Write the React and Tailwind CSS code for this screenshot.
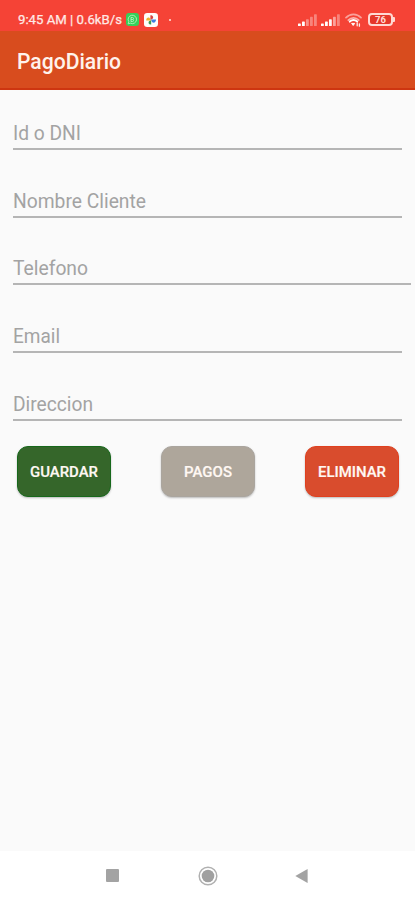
import React from "react";

const fields = [
  { label: "Id o DNI", size: "h-[60px] w-[389px]", length: 68 },
  { label: "Nombre Cliente", size: "h-[68px] w-[389px]", length: 133 },
  { label: "Telefono", size: "h-[67px] w-[398px]", length: 75 },
  { label: "Email", size: "h-[68px] w-[389px]", length: 47 },
  { label: "Direccion", size: "h-[68px] w-[389px]", length: 80 },
];

const buttons = [
  { label: "GUARDAR", color: "bg-[#35662a] border-[#17681b]", length: 68 },
  { label: "PAGOS", color: "bg-[#aea69b] border-[#aaa59e]", length: 48 },
  { label: "ELIMINAR", color: "bg-[#d94c2d] border-[#e0401f]", length: 68 },
];

// One line of text fitted to a fixed advance width.
function Label({ children, length, className, height = 24, baseline = 18 }) {
  return (
    <svg width={length} height={height} className={"block overflow-visible " + className}>
      <text x="0" y={baseline} fill="currentColor" textLength={length} lengthAdjust="spacingAndGlyphs">
        {children}
      </text>
    </svg>
  );
}

function Signal({ strong }) {
  return (
    <svg width="19" height="12" viewBox="0 0 19 12" fill="#fff" className="block">
      <rect x="0" y="9.4" width="2.8" height="2.6" rx=".6" />
      <rect x="4" y="7.6" width="2.8" height="4.4" rx=".6" />
      <rect x="8" y="5.3" width="2.8" height="6.7" rx=".6" opacity={strong ? 0.95 : 0.4} />
      <rect x="12" y="2.8" width="2.8" height="9.2" rx=".6" opacity={strong ? 0.5 : 0.35} />
      <rect x="16" y="0.2" width="2.8" height="11.8" rx=".6" opacity=".35" />
    </svg>
  );
}

function Wifi() {
  return (
    <svg width="17" height="14" viewBox="0 0 17 14" fill="none" stroke="#fff" strokeLinecap="round" className="block">
      <path d="M1 4.7C5.2.3 11.8.3 16 4.7" strokeWidth="1.7" opacity=".5" />
      <path d="M3.3 7.2C6.3 4.2 10.7 4.2 13.7 7.2" strokeWidth="1.7" opacity=".6" />
      <path d="M4.8 8.6C7 6.7 10 6.7 12.2 8.6" strokeWidth="2" />
      <path d="M7 10.4h2.6l-1.2 1.8z" fill="#fff" strokeWidth="1" />
      <path d="M12.2 10.2v2.6M14.4 11v2.2" strokeWidth="1.3" opacity=".9" />
    </svg>
  );
}

function Battery() {
  return (
    <div className="flex items-center">
      <div className="flex h-[13px] w-[25px] items-center justify-center rounded-[4px] border-2 border-[#ffd9d3] bg-[#e5372a] text-[9.5px] leading-none font-bold text-[#ffdcd6]">
        76
      </div>
      <div className="h-[5px] w-[2px] rounded-r-[1px] bg-[#ffd8d2]" />
    </div>
  );
}

function ChatIcon() {
  return (
    <svg width="13" height="13" viewBox="0 0 13 13" className="block">
      <rect width="13" height="13" rx="3" fill="#36cf59" />
      <path d="M2.2 10.8l.6-2.1a4.2 4.2 0 1 1 1.7 1.5z" fill="none" stroke="#b5f0be" strokeWidth=".9" />
      <path d="M5 4.4v4.2M5 4.5h1.5a1 1 0 0 1 0 2H5m1.5 0a1 1 0 0 1 0 2H5" fill="none" stroke="#b5f0be" strokeWidth=".9" />
    </svg>
  );
}

function PhotosIcon() {
  return (
    <svg width="14" height="14" viewBox="0 0 14 14" className="block">
      <rect width="14" height="14" rx="3.2" fill="#fffdfa" />
      <path d="M6.4 7V2.2C9 2.2 9.8 4.4 8.6 5.8z" fill="#d8433f" />
      <path d="M7 6.6h5C12 9.6 9.6 10.6 8 9z" fill="#3f7fe0" />
      <path d="M7.2 7v4.4C5 11.8 3.8 9.8 5 8.2z" fill="#3a9c55" />
      <path d="M7 7.4H2.2C2.2 4.8 4.2 4 5.6 5z" fill="#eeb32d" />
    </svg>
  );
}

export default function App() {
  return (
    <div className="flex h-[900px] w-[415px] flex-col overflow-hidden bg-[#fafafa] font-['Roboto',sans-serif]">
      <div className="flex h-[31px] shrink-0 items-center justify-between bg-[#f54336] pt-[8px] pr-[20px] pl-[18px]">
        <div className="flex items-center">
          <Label length={104} height={16} baseline={12} className="text-[13px] text-[#ffe9e5] [stroke:currentColor] [stroke-width:0.25px]">
            9:45 AM | 0.6kB/s
          </Label>
          <div className="ml-[4px]"><ChatIcon /></div>
          <div className="ml-[5px]"><PhotosIcon /></div>
          <div className="ml-[11px] h-[2px] w-[2px] rounded-full bg-[#ffe4df]" />
        </div>
        <div className="flex items-center">
          <Signal />
          <div className="ml-[4px]"><Signal strong /></div>
          <div className="ml-[5px]"><Wifi /></div>
          <div className="ml-[6px]"><Battery /></div>
        </div>
      </div>
      <header className="flex h-[59px] shrink-0 items-center border-b-2 border-[#ce3510] bg-[#d84c1e] pt-[5px] pl-[17px]">
        <Label length={104} height={28} baseline={21} className="text-[21.5px] font-medium text-[#fff3ec]">
          PagoDiario
        </Label>
      </header>
      <main className="flex grow flex-col">
        <form className="flex flex-col pl-[13px]">
          {fields.map((f) => (
            <div key={f.label} className={"flex flex-col justify-end border-b-2 border-[#b5b5b5] pb-[2px] " + f.size}>
              <Label length={f.length} className="text-[19.5px] text-[#a3a3a3]">{f.label}</Label>
            </div>
          ))}
        </form>
        <div className="mt-[25px] flex justify-between pr-[16px] pl-[17px]">
          {buttons.map((b) => (
            <button
              key={b.label}
              type="button"
              className={"flex h-[51px] w-[94px] items-center justify-center rounded-[11px] border shadow-[0_1px_2px_rgba(0,0,0,0.25)] " + b.color}
            >
              <Label length={b.length} height={20} baseline={15} className="text-[15px] font-medium text-[#fff8f3] [stroke:currentColor] [stroke-width:0.2px]">
                {b.label}
              </Label>
            </button>
          ))}
        </div>
      </main>
      <nav className="flex h-[49px] shrink-0 items-center bg-white pl-[106px]">
        <div className="h-[13px] w-[13px] rounded-[1px] bg-[#a3a3a3]" />
        <svg width="20" height="20" viewBox="0 0 20 20" className="ml-[79px] block">
          <circle cx="10" cy="10" r="8.8" fill="none" stroke="#b0b0b0" strokeWidth="1.5" />
          <circle cx="10" cy="10" r="6.3" fill="#a0a0a0" />
        </svg>
        <svg width="13" height="14" viewBox="0 0 13 14" className="ml-[77px] block">
          <path d="M12.6 0v14L.3 7z" fill="#a3a3a3" />
        </svg>
      </nav>
    </div>
  );
}
